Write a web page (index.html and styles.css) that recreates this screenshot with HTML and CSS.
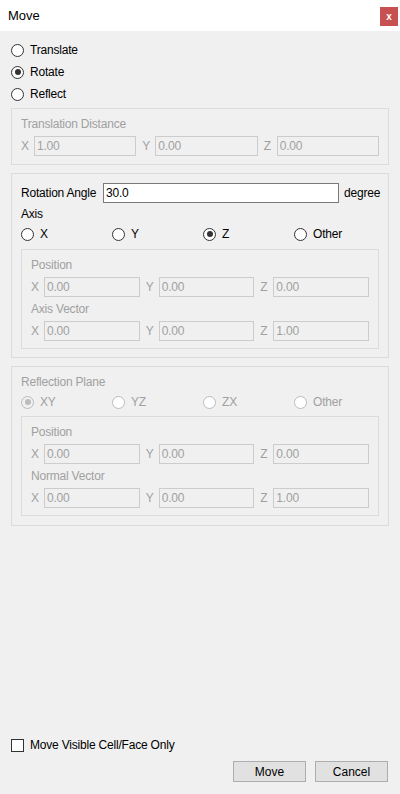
FILE: index.html
```html
<!DOCTYPE html>
<html>
<head>
    <link rel="stylesheet" href="styles.css">
</head>
<body>
    <div class="window">
        <div class="titlebar">
            <span class="title">Move</span>
            <span class="close">x</span>
        </div>

        <div class="content">
            <div class="radio-row"><span class="radio"></span>Translate</div>
            <div class="radio-row"><span class="radio checked"></span>Rotate</div>
            <div class="radio-row"><span class="radio"></span>Reflect</div>

            <div class="group group-translate disabled">
                <div class="label-line">Translation Distance</div>
                <div class="xyz">
                    <div class="field"><span>X</span><input class="box" value="1.00" disabled></div>
                    <div class="field"><span>Y</span><input class="box" value="0.00" disabled></div>
                    <div class="field"><span>Z</span><input class="box" value="0.00" disabled></div>
                </div>
            </div>

            <div class="group group-rotate">
                <div class="angle-row">
                    <span class="angle-label">Rotation Angle</span>
                    <input class="box active" value="30.0">
                    <span>degree</span>
                </div>
                <div class="label-line axis-label">Axis</div>
                <div class="choices">
                    <div class="choice"><span class="radio"></span>X</div>
                    <div class="choice"><span class="radio"></span>Y</div>
                    <div class="choice"><span class="radio checked"></span>Z</div>
                    <div class="choice"><span class="radio"></span>Other</div>
                </div>
                <div class="inner disabled">
                    <div class="label-line">Position</div>
                    <div class="xyz">
                        <div class="field"><span>X</span><input class="box" value="0.00" disabled></div>
                        <div class="field"><span>Y</span><input class="box" value="0.00" disabled></div>
                        <div class="field"><span>Z</span><input class="box" value="0.00" disabled></div>
                    </div>
                    <div class="label-line">Axis Vector</div>
                    <div class="xyz">
                        <div class="field"><span>X</span><input class="box" value="0.00" disabled></div>
                        <div class="field"><span>Y</span><input class="box" value="0.00" disabled></div>
                        <div class="field"><span>Z</span><input class="box" value="1.00" disabled></div>
                    </div>
                </div>
            </div>

            <div class="group group-reflect disabled">
                <div class="label-line">Reflection Plane</div>
                <div class="choices">
                    <div class="choice"><span class="radio checked"></span>XY</div>
                    <div class="choice"><span class="radio"></span>YZ</div>
                    <div class="choice"><span class="radio"></span>ZX</div>
                    <div class="choice"><span class="radio"></span>Other</div>
                </div>
                <div class="inner">
                    <div class="label-line">Position</div>
                    <div class="xyz">
                        <div class="field"><span>X</span><input class="box" value="0.00" disabled></div>
                        <div class="field"><span>Y</span><input class="box" value="0.00" disabled></div>
                        <div class="field"><span>Z</span><input class="box" value="0.00" disabled></div>
                    </div>
                    <div class="label-line">Normal Vector</div>
                    <div class="xyz">
                        <div class="field"><span>X</span><input class="box" value="0.00" disabled></div>
                        <div class="field"><span>Y</span><input class="box" value="0.00" disabled></div>
                        <div class="field"><span>Z</span><input class="box" value="1.00" disabled></div>
                    </div>
                </div>
            </div>

            <div class="spacer"></div>

            <div class="check-row"><span class="checkbox"></span>Move Visible Cell/Face Only</div>
            <div class="buttons">
                <button class="btn">Move</button>
                <button class="btn">Cancel</button>
            </div>
        </div>
    </div>
</body>
</html>
```

FILE: styles.css
```css
body {
    margin: 0;
    font-family: "Liberation Sans", Arial, sans-serif;
    font-size: 12px;
    letter-spacing: -0.2px;
    color: #000;
    background: #f0f0f0;
}
.window {
    width: 400px;
    height: 794px;
    display: flex;
    flex-direction: column;
    background: #f0f0f0;
}
.titlebar {
    height: 31px;
    background: #fff;
    display: flex;
    align-items: center;
    justify-content: space-between;
    padding: 0 2px 0 8px;
}
.title {
    font-size: 13px;
    letter-spacing: 0;
    color: #000;
}
.close {
    width: 18px;
    height: 19px;
    background: #c75050;
    color: #fff;
    font-weight: bold;
    font-size: 10px;
    display: flex;
    align-items: center;
    justify-content: center;
    margin-top: 2px;
}
.content {
    flex: 1;
    display: flex;
    flex-direction: column;
    padding: 8px 11px 12px 11px;
}
.radio-row {
    height: 22px;
    display: flex;
    align-items: center;
}
.radio {
    width: 11px;
    height: 11px;
    border: 1px solid #333;
    border-radius: 50%;
    background: #fff;
    margin-right: 6px;
    position: relative;
    flex: none;
}
.radio.checked::after {
    content: "";
    position: absolute;
    left: 2.5px;
    top: 2.5px;
    width: 6px;
    height: 6px;
    border-radius: 50%;
    background: #333;
}
.group {
    border: 1px solid #dcdcdc;
    padding: 7px 9px;
}
.group-translate {
    margin-top: 3px;
    padding-bottom: 8px;
}
.group-rotate {
    margin-top: 8px;
    padding-top: 9px;
    padding-bottom: 8px;
}
.group-reflect {
    margin-top: 8px;
    padding-bottom: 9px;
}
.label-line {
    height: 16px;
    line-height: 16px;
}
.xyz {
    display: grid;
    grid-template-columns: 1fr 1fr 1fr;
    column-gap: 6px;
    margin-top: 4px;
}
.xyz + .label-line {
    margin-top: 4px;
}
.field {
    display: flex;
    align-items: center;
}
.field span {
    width: 13px;
    flex: none;
}
.box {
    font-family: "Liberation Sans", Arial, sans-serif;
    font-size: 12px;
    letter-spacing: -0.2px;
    height: 20px;
    box-sizing: border-box;
    border: 1px solid #ccc;
    background: #f0f0f0;
    color: #a0a0a0;
    padding: 0 2px;
    margin: 0;
    min-width: 0;
    width: 100%;
    outline: none;
}
.box.active {
    border-color: #7a7a7a;
    background: #fff;
    color: #000;
}
.disabled,
.disabled .box {
    color: #a0a0a0;
}
.disabled .radio {
    border-color: #bcbcbc;
    background: #fff;
}
.disabled .radio.checked {
    background: #f0f0f0;
}
.disabled .radio.checked::after {
    background: #bcbcbc;
}
.angle-row {
    display: flex;
    align-items: center;
    white-space: nowrap;
}
.angle-label {
    width: 82px;
    flex: none;
}
.angle-row .box {
    width: 236px;
    flex: none;
    margin-right: 5px;
}
.axis-label {
    margin-top: 3px;
}
.choices {
    display: grid;
    grid-template-columns: 91px 91px 91px 91px;
    height: 16px;
    align-items: center;
    margin: 4px 0 7px 0;
}
.group-reflect .choices {
    margin-bottom: 6px;
}
.choice {
    display: flex;
    align-items: center;
}
.inner {
    border: 1px solid #dcdcdc;
    padding: 7px 9px;
}
.spacer {
    flex: 1;
}
.check-row {
    display: flex;
    align-items: center;
    height: 16px;
    margin-bottom: 1px;
}
.checkbox {
    width: 11px;
    height: 11px;
    border: 1px solid #333;
    background: #fff;
    margin-right: 6px;
}
.buttons {
    display: flex;
    justify-content: flex-end;
    gap: 9px;
    margin-top: 7px;
    padding-right: 1px;
}
.btn {
    width: 73px;
    height: 21px;
    font-family: "Liberation Sans", Arial, sans-serif;
    font-size: 12px;
    background: #e1e1e1;
    border: 1px solid #adadad;
    color: #000;
    padding: 0;
}
```
